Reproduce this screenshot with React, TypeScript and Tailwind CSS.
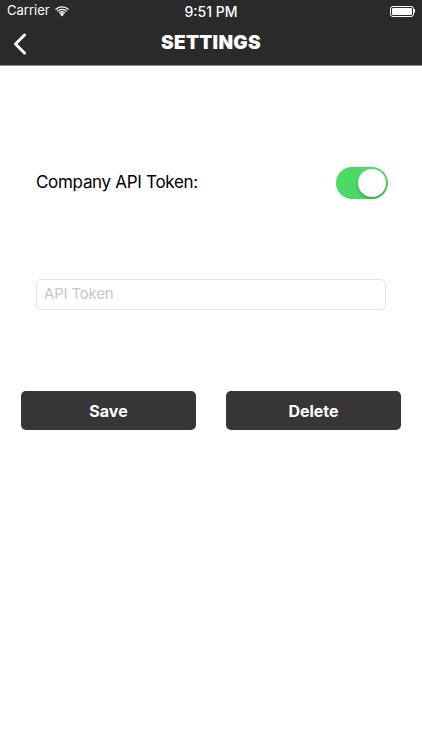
export default function App() {
  return (
    <div className="w-[422px] h-[750px] bg-white flex flex-col" style={{ fontFamily: "Inter, 'Liberation Sans', sans-serif" }}>
      {/* header: status bar + nav */}
      <div className="bg-[#2a2a2a] border-b border-[#8a8a8a] h-[66px] flex flex-col">
        <div className="h-[22px] flex items-center justify-between px-[7px] text-white text-[13px]">
          <div className="flex items-center gap-[5px] w-[100px]">
            <span>Carrier</span>
            <svg width="14" height="11" viewBox="0 0 14 11" fill="white">
              <path d="M7 10.5 L4.9 8.1 A3 3 0 0 1 9.1 8.1 Z" />
              <path d="M3.6 6.6 A5 5 0 0 1 10.4 6.6 L9.5 7.6 A3.7 3.7 0 0 0 4.5 7.6 Z" />
              <path d="M1.8 4.8 A7.6 7.6 0 0 1 12.2 4.8 L11.3 5.8 A6.3 6.3 0 0 0 2.7 5.8 Z" />
              <path d="M0 3 A10 10 0 0 1 14 3 L13.1 4 A8.8 8.8 0 0 0 0.9 4 Z" />
            </svg>
          </div>
          <span className="font-medium text-[14px]">9:51 PM</span>
          <div className="w-[100px] flex justify-end">
            <div className="flex items-center">
              <div className="w-[24px] h-[11px] border border-white rounded-[3px] p-[1px]">
                <div className="w-full h-full bg-white rounded-[1px]" />
              </div>
              <div className="w-[1.5px] h-[4px] bg-white rounded-r-sm" />
            </div>
          </div>
        </div>
        <div className="flex-1 flex items-center relative">
          <svg className="absolute left-[13px] top-[11px]" width="14" height="22" viewBox="0 0 14 22" fill="none" stroke="white" strokeWidth="3" strokeLinecap="round" strokeLinejoin="round">
            <path d="M11.5 2 L2.5 11 L11.5 20" />
          </svg>
          <div className="w-full text-center text-white text-[19px] font-black tracking-[0.3px]">SETTINGS</div>
        </div>
      </div>

      <div className="flex items-center justify-between pl-[36px] pr-[34px] mt-[101px]">
        <span className="text-[17px] tracking-[-0.3px] text-black">Company API Token:</span>
        <div className="w-[52px] h-[32px] rounded-full bg-[#4cd964] relative">
          <div className="absolute right-[2px] top-[2px] w-[28px] h-[28px] rounded-full bg-white shadow-[0_2px_3px_rgba(0,0,0,0.25)]" />
        </div>
      </div>

      <div className="mt-[80px] mx-[36px]">
        <div className="h-[31px] border border-[#e3e3e3] rounded-[5px] flex items-center px-[7px] text-[15px] tracking-[-0.2px] text-[#c7c7cd]">API Token</div>
      </div>

      <div className="mt-[81px] px-[21px] flex justify-between">
        <button className="w-[175px] h-[39px] bg-[#363636] rounded-[5px] text-white text-[16px] font-bold">Save</button>
        <button className="w-[175px] h-[39px] bg-[#363636] rounded-[5px] text-white text-[16px] font-bold">Delete</button>
      </div>
    </div>
  );
}
